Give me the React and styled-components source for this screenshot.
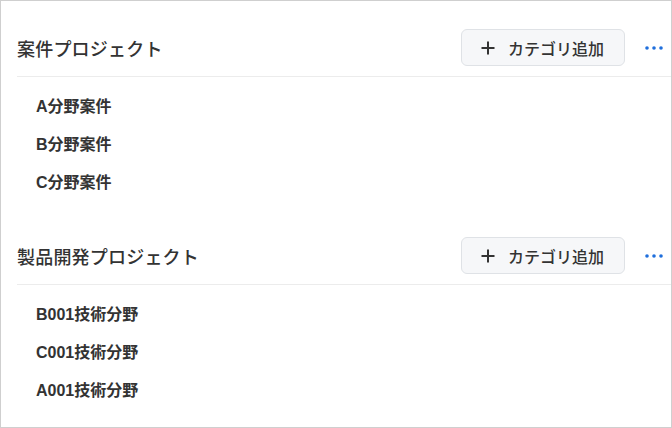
import styled, { createGlobalStyle } from "styled-components";

const GlobalStyle = createGlobalStyle`
  html, body {
    margin: 0;
    padding: 0;
    background: #ffffff;
  }
  body {
    font-family: "Liberation Sans", "Noto Sans CJK JP", sans-serif;
    color: #333333;
  }
`;

const projects = [
  {
    name: "案件プロジェクト",
    categories: ["A分野案件", "B分野案件", "C分野案件"],
  },
  {
    name: "製品開発プロジェクト",
    categories: ["B001技術分野", "C001技術分野", "A001技術分野"],
  },
];

const Frame = styled.div`
  box-sizing: border-box;
  width: 672px;
  height: 428px;
  border: 1px solid #cfcfcf;
  padding-top: 28px;
  display: flex;
  flex-direction: column;
  gap: 37px;
  overflow: hidden;
`;

const Section = styled.section`
  padding-left: 16px;
`;

const Header = styled.div`
  display: flex;
  align-items: center;
  height: 37px;
  padding-right: 3px;
  padding-bottom: 10px;
  border-bottom: 1px solid #ececec;
`;

const Title = styled.h2`
  flex: 1;
  margin: 0;
  font-size: 18px;
  font-weight: 500;
  color: #333333;
  letter-spacing: 0.2px;
`;

const AddButton = styled.button`
  box-sizing: border-box;
  height: 37px;
  width: 164px;
  display: flex;
  align-items: center;
  gap: 13px;
  padding: 0 0 0 19px;
  background: #f6f7f9;
  border: 1px solid #dfe2e6;
  border-radius: 6px;
  font-family: inherit;
  font-size: 16px;
  font-weight: 500;
  color: #333333;
  cursor: pointer;
`;

const MoreButton = styled.button`
  width: 28px;
  height: 28px;
  margin-left: 15px;
  padding: 0;
  border: none;
  background: none;
  display: flex;
  align-items: center;
  justify-content: center;
  cursor: pointer;
`;

const List = styled.ul`
  list-style: none;
  margin: 0;
  padding: 9px 0 0 19px;
`;

const Item = styled.li`
  height: 38px;
  display: flex;
  align-items: center;
  font-size: 16px;
  font-weight: 700;
  color: #333333;
`;

const PlusIcon = () => (
  <svg width="14" height="14" viewBox="0 0 14 14">
    <path d="M7 0.5v13M0.5 7h13" stroke="#333" strokeWidth="2" />
  </svg>
);

const DotsIcon = () => (
  <svg width="18" height="4" viewBox="0 0 18 4">
    <circle cx="2" cy="2" r="1.8" fill="#1f6fdc" />
    <circle cx="9" cy="2" r="1.8" fill="#1f6fdc" />
    <circle cx="16" cy="2" r="1.8" fill="#1f6fdc" />
  </svg>
);

const App = () => {
  return (
    <>
      <GlobalStyle />
      <Frame>
        {projects.map((p) => (
          <Section key={p.name}>
            <Header>
              <Title>{p.name}</Title>
              <AddButton>
                <PlusIcon />
                カテゴリ追加
              </AddButton>
              <MoreButton aria-label="more">
                <DotsIcon />
              </MoreButton>
            </Header>
            <List>
              {p.categories.map((c) => (
                <Item key={c}>{c}</Item>
              ))}
            </List>
          </Section>
        ))}
      </Frame>
    </>
  );
};

export default App;
